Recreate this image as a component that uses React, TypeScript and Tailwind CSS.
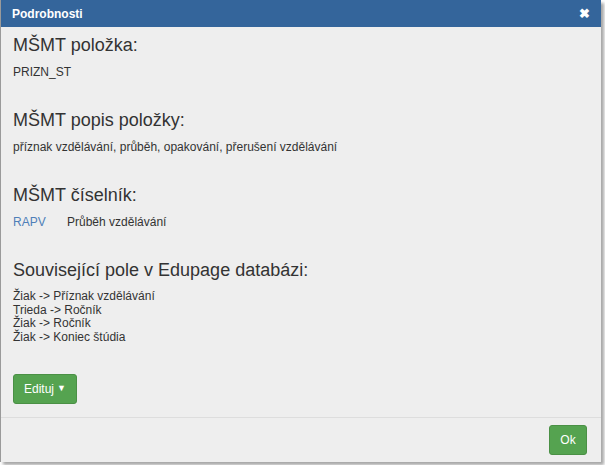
import React from "react";

export default function App() {
  return (
    <div className="w-[605px] h-[465px] bg-white relative overflow-hidden" style={{ fontFamily: '"Liberation Sans", Arial, sans-serif' }}>
      <div className="w-[601px] h-[462px] flex flex-col bg-[#eeeeee] border-l border-[#9a9a9a] shadow-[3px_3px_3px_rgba(0,0,0,0.35)]">
        <div className="h-[27px] bg-[#34659b] flex items-center justify-between pl-[11px] pr-[11px] shrink-0">
          <span className="text-white text-[12px] font-bold">Podrobnosti</span>
          <span className="text-white text-[13px] font-bold leading-none">✖</span>
        </div>
        <div className="flex-1 flex flex-col pl-[12px] pt-[6px] text-[#333333]">
          <div className="text-[18px] leading-[24px]">MŠMT položka:</div>
          <div className="text-[12px] leading-[14px] mt-[8px]">PRIZN_ST</div>
          <div className="text-[18px] leading-[24px] mt-[29px]">MŠMT popis položky:</div>
          <div className="text-[12px] leading-[14px] mt-[8px]">příznak vzdělávání, průběh, opakování, přerušení vzdělávání</div>
          <div className="text-[18px] leading-[24px] mt-[29px]">MŠMT číselník:</div>
          <div className="text-[12px] leading-[14px] mt-[8px] flex">
            <span className="text-[#4f7fb8] w-[54px]">RAPV</span>
            <span>Průběh vzdělávání</span>
          </div>
          <div className="text-[18px] leading-[24px] mt-[29px]">Související pole v Edupage databázi:</div>
          <div className="text-[12px] leading-[13.5px] mt-[8px] flex flex-col">
            <span>Žiak -&gt; Příznak vzdělávání</span>
            <span>Trieda -&gt; Ročník</span>
            <span>Žiak -&gt; Ročník</span>
            <span>Žiak -&gt; Koniec štúdia</span>
          </div>
          <div className="mt-[30px]">
            <button className="h-[30px] px-[10px] bg-[#55a350] border border-[#4a9045] rounded-[3px] text-white text-[12px] flex items-center gap-[3px]">
              <span>Edituj</span>
              <span className="text-[9px]">▼</span>
            </button>
          </div>
        </div>
        <div className="border-t border-[#dddddd] h-[45px] flex items-center justify-end pr-[14px] shrink-0">
          <button className="h-[30px] w-[38px] bg-[#55a350] border border-[#4a9045] rounded-[3px] text-white text-[12px]">Ok</button>
        </div>
      </div>
    </div>
  );
}
